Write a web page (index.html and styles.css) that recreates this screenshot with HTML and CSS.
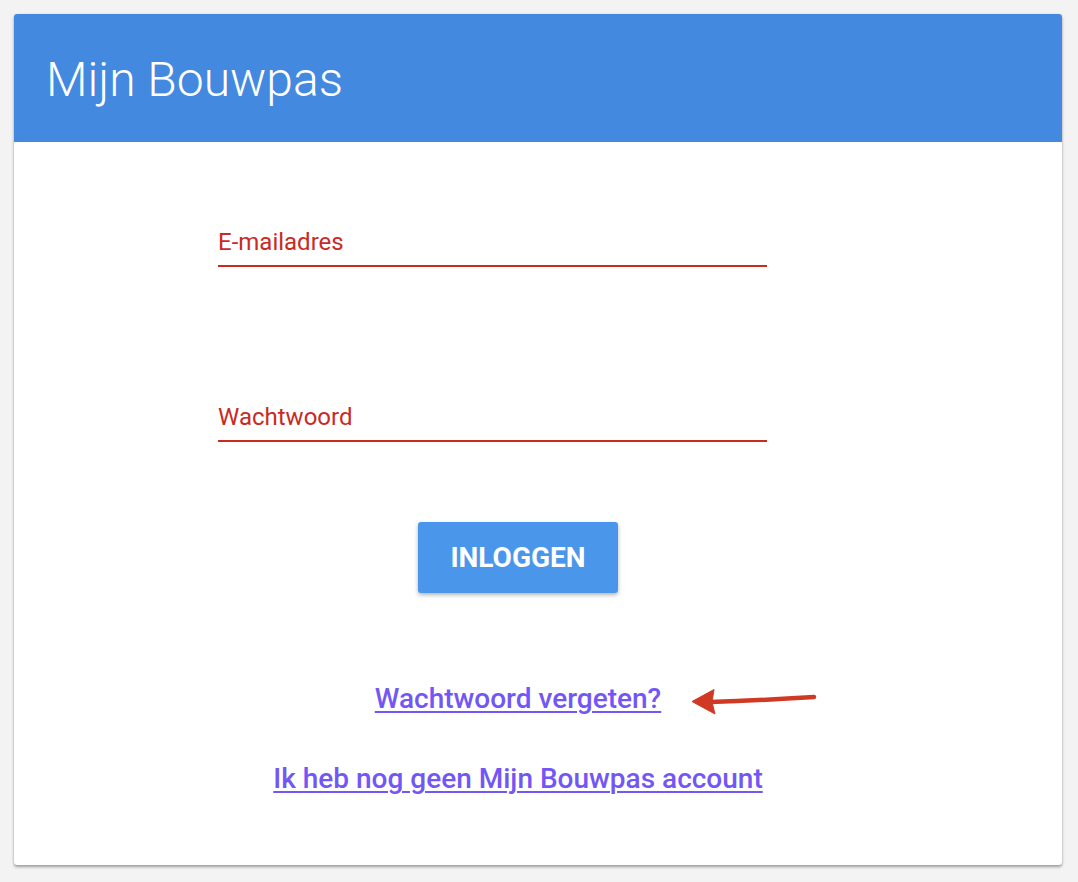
FILE: index.html
```html
<!DOCTYPE html>
<html lang="nl">
<head>
<meta charset="utf-8">
<title>Mijn Bouwpas</title>
<link rel="stylesheet" href="styles.css">
</head>
<body>
<div class="card">
  <header class="card-header">
    <h1 class="title">Mijn Bouwpas</h1>
  </header>
  <main class="card-body">
    <div class="field field-email">
      <label class="field-label">E-mailadres</label>
    </div>
    <div class="field field-password">
      <label class="field-label">Wachtwoord</label>
    </div>
    <button class="btn-login" type="button">INLOGGEN</button>
    <div class="link-row link-row-forgot">
      <span class="link-wrap">
        <a class="link" href="#">Wachtwoord vergeten?</a>
        <svg class="arrow" width="132" height="34" viewBox="0 0 132 34" aria-hidden="true">
          <path d="M22 17 Q 70 15.5 126 12" fill="none" stroke="#d03a25" stroke-width="4.5" stroke-linecap="round"/>
          <path d="M4 16.5 L26 4.5 L24 17 L27 29 Z" fill="#d03a25" stroke="#d03a25" stroke-width="1" stroke-linejoin="round"/>
        </svg>
      </span>
    </div>
    <div class="link-row link-row-register">
      <a class="link" href="#">Ik heb nog geen Mijn Bouwpas account</a>
    </div>
  </main>
</div>
</body>
</html>
```

FILE: styles.css
```css
html, body {
  margin: 0;
  padding: 0;
}
body {
  background: #f3f3f3;
  font-family: Roboto, "Liberation Sans", Arial, sans-serif;
  padding: 14px 16px 0 14px;
  min-height: 882px;
  box-sizing: border-box;
}
.card {
  width: 1048px;
  height: 851px;
  background: #ffffff;
  border-radius: 3px;
  box-shadow: 0 2px 3px rgba(0, 0, 0, 0.35), 0 0 2px rgba(0, 0, 0, 0.08);
  overflow: hidden;
  display: flex;
  flex-direction: column;
}
.card-header {
  height: 128px;
  box-sizing: border-box;
  background: #4389df;
  padding: 3px 0 0 32px;
}
.title {
  margin: 0;
  font-weight: 300;
  font-size: 48px;
  line-height: 125px;
  color: #ffffff;
  letter-spacing: 0;
}
.card-body {
  display: flex;
  flex-direction: column;
  align-items: center;
  padding: 0 40px 0 0;
}
.field {
  align-self: flex-start;
  margin-left: 204px;
  width: 549px;
  padding-bottom: 9px;
  border-bottom: 2px solid #c92b1f;
}
.field-email {
  margin-top: 86px;
}
.field-password {
  margin-top: 136px;
}
.field-label {
  display: block;
  font-size: 24px;
  line-height: 28px;
  color: #c92b1f;
  font-weight: 400;
}
.btn-login {
  margin-top: 80px;
  width: 200px;
  height: 71px;
  border: none;
  border-radius: 3px;
  background: #4a96ea;
  color: #ffffff;
  font-family: Roboto, "Liberation Sans", Arial, sans-serif;
  font-weight: 700;
  font-size: 28px;
  letter-spacing: 0;
  box-shadow: 0 2px 4px rgba(0, 0, 0, 0.3);
  cursor: pointer;
}
.link-row {
  line-height: 32px;
}
.link-row-forgot {
  margin-top: 90px;
}
.link-row-register {
  margin-top: 44px;
}
.link-wrap {
  position: relative;
  display: inline-block;
}
.link {
  font-size: 28px;
  font-weight: 500;
  color: #7357f6;
  text-decoration: underline;
  text-decoration-thickness: 2px;
  text-underline-offset: 3px;
}
.arrow {
  position: absolute;
  left: calc(100% + 27px);
  top: 2px;
}
```
